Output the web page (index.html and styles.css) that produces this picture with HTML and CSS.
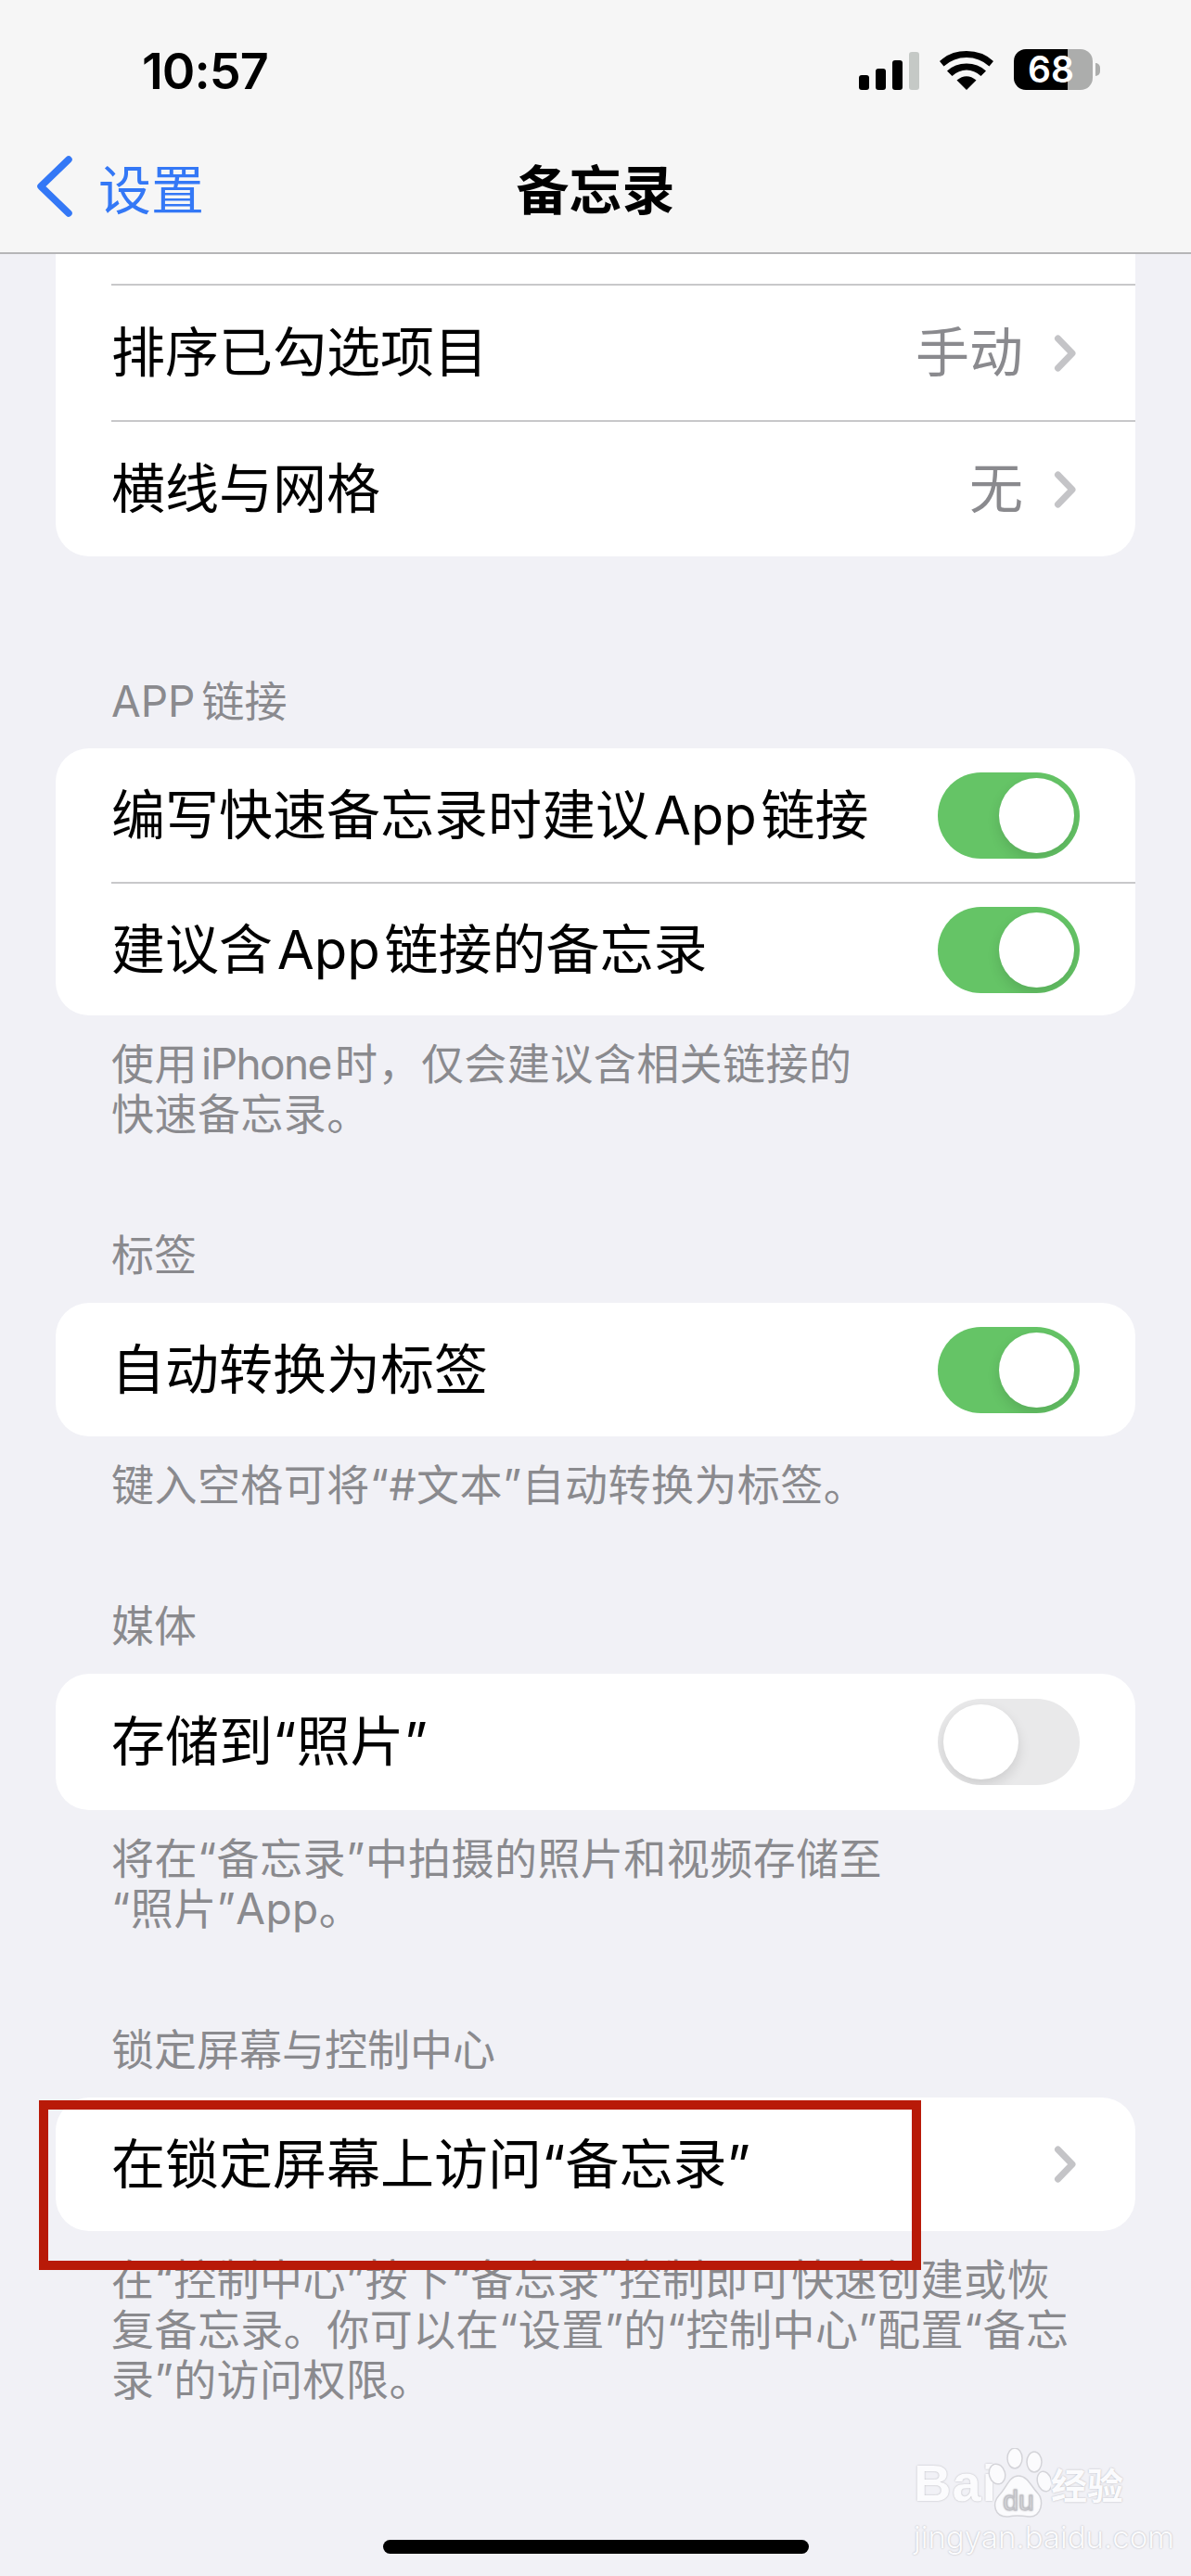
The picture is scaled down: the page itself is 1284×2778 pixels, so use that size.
FILE: index.html
```html
<!DOCTYPE html>
<html lang="zh-CN">
<head>
    <meta charset="UTF-8">
    <title>备忘录</title>
    <link rel="stylesheet" href="styles.css">
</head>
<body>
<div class="phone">
    <div class="top">
        <div class="status">
            <span class="time">10:57</span>
            <div class="status-icons">
                <div class="signal"><i class="b1"></i><i class="b2"></i><i class="b3"></i><i class="b4"></i></div>
                <svg class="wifi" width="58" height="42" viewBox="0 0 58 42">
                    <path d="M29 42 L18.5 31.5 Q29 23 39.5 31.5 Z"/>
                    <path d="M29 13.5 Q41.5 13.5 50 21.5 L44.5 27 Q37.5 20.5 29 20.5 Q20.5 20.5 13.5 27 L8 21.5 Q16.5 13.5 29 13.5 Z"/>
                    <path d="M29 0 Q46.5 0 58 11 L53.5 16.5 Q43 7 29 7 Q15 7 4.5 16.5 L0 11 Q11.5 0 29 0 Z"/>
                </svg>
                <div class="battery"><div class="battery-body"><span>68</span></div><i class="battery-nub"></i></div>
            </div>
        </div>
        <div class="nav">
            <div class="back">
                <svg width="42" height="66" viewBox="0 0 42 66"><path d="M36 4 L6 33 L36 62" fill="none" stroke="#3478f6" stroke-width="7.5" stroke-linecap="round" stroke-linejoin="round"/></svg>
                <span>设置</span>
            </div>
            <div class="title">备忘录</div>
        </div>
    </div>

    <div class="content">
        <div class="card first">
            <div class="row row-stub"></div>
            <div class="row">
                <span class="label">排序已勾选项目</span>
                <span class="value">手动</span>
                <svg class="chev" width="26" height="40" viewBox="0 0 26 40"><path d="M5.5 4 L21 20 L5.5 36"/></svg>
            </div>
            <div class="row">
                <span class="label">横线与网格</span>
                <span class="value">无</span>
                <svg class="chev" width="26" height="40" viewBox="0 0 26 40"><path d="M5.5 4 L21 20 L5.5 36"/></svg>
            </div>
        </div>

        <div class="head head-app">APP 链接</div>
        <div class="card">
            <div class="row">
                <span class="label">编写快速备忘录时建议 App 链接</span>
                <div class="toggle on"><i></i></div>
            </div>
            <div class="row">
                <span class="label">建议含 App 链接的备忘录</span>
                <div class="toggle on"><i></i></div>
            </div>
        </div>
        <div class="foot">使用 <span class="latin">iPhone</span> 时，仅会建议含相关链接的<br>快速备忘录。</div>

        <div class="head">标签</div>
        <div class="card">
            <div class="row">
                <span class="label">自动转换为标签</span>
                <div class="toggle on"><i></i></div>
            </div>
        </div>
        <div class="foot">键入空格可将“#文本”自动转换为标签。</div>

        <div class="head head-media">媒体</div>
        <div class="card">
            <div class="row row-tall">
                <span class="label">存储到“照片”</span>
                <div class="toggle"><i></i></div>
            </div>
        </div>
        <div class="foot">将在“备忘录”中拍摄的照片和视频存储至<br>“照片”App。</div>

        <div class="head">锁定屏幕与控制中心</div>
        <div class="card">
            <div class="row">
                <span class="label">在锁定屏幕上访问“备忘录”</span>
                <svg class="chev" width="26" height="40" viewBox="0 0 26 40"><path d="M5.5 4 L21 20 L5.5 36"/></svg>
            </div>
        </div>
        <div class="foot">在“控制中心”按下“备忘录”控制即可快速创建或恢<br>复备忘录。你可以在“设置”的“控制中心”配置“备忘<br>录”的访问权限。</div>
    </div>

    <!-- 红框、水印、home条都盖在页面上面 -->
    <div class="redbox"></div>
    <div class="mark">
        <div class="mark-top">
            <span class="mark-bai">Bai</span>
            <svg class="paw" width="68" height="76" viewBox="0 0 68 76">
                <g fill="#fbfbfd" stroke="#d4d4d9" stroke-width="1.5">
                    <ellipse cx="10" cy="28" rx="8.5" ry="11" transform="rotate(-15 10 28)"/>
                    <ellipse cx="29" cy="11" rx="8" ry="11"/>
                    <ellipse cx="50" cy="15" rx="8" ry="11"/>
                    <ellipse cx="61" cy="36" rx="7.5" ry="11" transform="rotate(-15 61 36)"/>
                    <path d="M33 30 C43 30 47 42 54 49 C61 56 58 75 44 74 C38 73 30 72 22 74 C7 75 4 60 12 51 C20 43 23 30 33 30 Z"/>
                </g>
                <text x="33" y="67" class="paw-du">du</text>
            </svg>
            <span class="mark-cn">经验</span>
        </div>
        <div class="mark-url">jingyan.baidu.com</div>
    </div>
    <div class="home"></div>
</div>
</body>
</html>
```

FILE: styles.css
```css
* {
    padding: 0;
    margin: 0;
    box-sizing: border-box;
}

body {
    font-family: "Inter", "Noto Sans CJK SC", sans-serif;
    background: #f2f2f7;
}

.phone {
    width: 1284px;
    height: 2778px;
    position: relative;
    overflow: hidden;
    background: #f1f1f6;
}

.top {
    height: 274px;
    background: #f6f6f6;
    border-bottom: 2px solid #b6b6b8;
}

.status {
    height: 124px;
    padding: 53px 98px 0 153px;
    display: flex;
    justify-content: space-between;
}

.time {
    font-size: 54px;
    line-height: 48px;
    font-weight: 600;
    letter-spacing: -1px;
    color: #000;
}

.status-icons {
    display: flex;
    align-items: flex-end;
    height: 44px;
    gap: 22px;
}

.signal {
    display: flex;
    align-items: flex-end;
    gap: 7px;
}

.signal i {
    display: block;
    width: 11px;
    background: #000;
    border-radius: 3px;
}

.signal .b1 { height: 16px; }
.signal .b2 { height: 23px; }
.signal .b3 { height: 32px; }
.signal .b4 { height: 41px; background: #c5c9c6; }

.wifi path {
    fill: #000;
}

.battery {
    display: flex;
    align-items: center;
    gap: 3px;
}

.battery-body {
    width: 85px;
    height: 44px;
    border-radius: 13px;
    background: linear-gradient(90deg, #000 0, #000 58px, #acadac 58px);
    color: #fff;
    font-size: 39px;
    line-height: 44px;
    font-weight: 600;
    padding-left: 15px;
}

.battery-nub {
    display: block;
    width: 5px;
    height: 14px;
    background: #acadac;
    border-radius: 0 7px 7px 0;
}

.nav {
    height: 148px;
    padding-top: 6px;
    position: relative;
    display: flex;
    align-items: center;
    justify-content: center;
}

.back {
    position: absolute;
    left: 38px;
    top: 3px;
    height: 148px;
    display: flex;
    align-items: center;
    gap: 26px;
    color: #3478f6;
    font-size: 57px;
}

.title {
    font-size: 57px;
    font-weight: 700;
    color: #000;
}

.content {
    padding: 0 60px;
}

.card {
    background: #fff;
    border-radius: 36px;
    overflow: hidden;
}

.card.first {
    border-radius: 0 0 36px 36px;
}

.row {
    height: 144px;
    padding-left: 60px;
    padding-right: 60px;
    display: flex;
    align-items: center;
    font-size: 58px;
    word-spacing: -0.2em;
    color: #000;
}

.row + .row {
    border-top: 2px solid #c8c8ca;
    margin-left: 60px;
    padding-left: 0;
}

.row-tall {
    height: 147px;
}

.first .row {
    height: 147px;
}

.first .row-stub {
    height: 32px;
}

.label {
    flex: 1;
    white-space: nowrap;
    padding-bottom: 9px;
}

.value {
    color: #8a8a8e;
    padding-bottom: 9px;
}

.chev {
    margin-left: 32px;
    margin-right: 3px;
}

.chev path {
    fill: none;
    stroke: #c4c4c7;
    stroke-width: 7;
    stroke-linecap: round;
    stroke-linejoin: round;
}

.toggle {
    width: 153px;
    height: 93px;
    border-radius: 47px;
    background: #e9e9ea;
    padding: 6px;
    overflow: hidden;
}

.toggle i {
    display: block;
    width: 81px;
    height: 81px;
    border-radius: 50%;
    background: #fff;
    box-shadow: 0 6px 14px rgba(0, 0, 0, 0.12);
}

.toggle.on {
    background: #65c466;
}

.toggle.on i {
    margin-left: 60px;
}

.head {
    padding: 98px 60px 0;
    height: 177px;
    font-size: 46px;
    line-height: 54px;
    word-spacing: -0.13em;
    color: #8a8a8e;
}

.head-app {
    height: 207px;
    padding-top: 129px;
}

.foot {
    padding: 25px 60px 0;
    font-size: 46px;
    line-height: 54px;
    letter-spacing: 0.45px;
    word-spacing: -0.2em;
    color: #8a8a8e;
}

.latin {
    letter-spacing: -1.6px;
}

.redbox {
    position: absolute;
    left: 42px;
    top: 2265px;
    width: 951px;
    height: 183px;
    border: 10px solid #b81a08;
}

.mark {
    position: absolute;
    left: 985px;
    top: 2640px;
    width: 232px;
    color: #fbfbfd;
    text-shadow: 0 0 2px #b0b0b5;
}

.mark-top {
    display: flex;
    align-items: flex-end;
    height: 76px;
}

.mark-bai {
    width: 80px;
    font-family: "Liberation Sans", sans-serif;
    font-size: 56px;
    line-height: 76px;
    font-weight: 700;
    letter-spacing: 1px;
}

.mark-cn {
    font-size: 39px;
    line-height: 70px;
    font-weight: 700;
}

.paw-du {
    font-family: "Liberation Sans", sans-serif;
    font-size: 30px;
    text-anchor: middle;
    fill: #e6e6ea;
    stroke: #c0c0c5;
    stroke-width: 1;
}

.mark-url {
    font-size: 33px;
    line-height: 40px;
    white-space: nowrap;
    font-weight: 300;
}

.home {
    position: absolute;
    left: 413px;
    top: 2739px;
    width: 459px;
    height: 15px;
    border-radius: 8px;
    background: #000;
}
```
